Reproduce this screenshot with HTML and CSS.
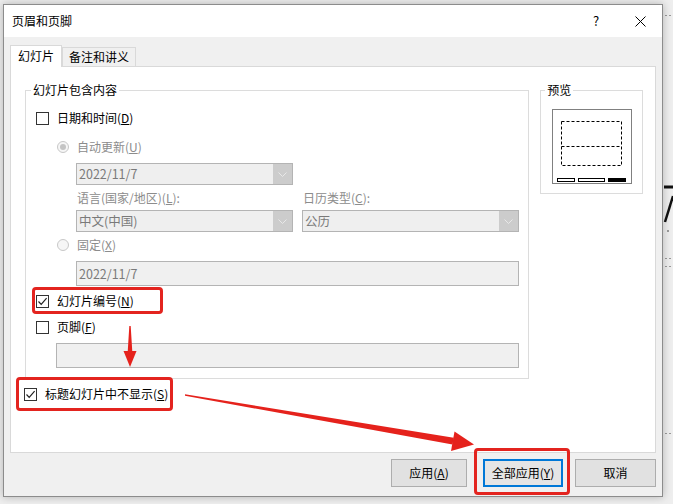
FILE: index.html
```html
<!DOCTYPE html>
<html lang="zh-CN">
<head>
    <meta charset="UTF-8">
    <title>页眉和页脚</title>
    <link rel="stylesheet" href="styles.css">
</head>
<body>
    <!-- slide behind the dialog -->
    <svg class="slide-bits" width="673" height="504" viewBox="0 0 673 504">
        <g stroke="#9a9a9a" stroke-dasharray="2 2">
            <line x1="665" y1="15.5" x2="673" y2="15.5"/>
            <line x1="665" y1="258.5" x2="673" y2="258.5"/>
            <line x1="665" y1="266.5" x2="673" y2="266.5"/>
            <line x1="665" y1="433.5" x2="673" y2="433.5"/>
        </g>
        <line x1="664" y1="187" x2="673" y2="187" stroke="#111" stroke-width="3"/>
        <line x1="673" y1="196" x2="665" y2="222" stroke="#111" stroke-width="2.5"/>
        <circle cx="668" cy="231" r="0.8" fill="#333"/>
    </svg>

    <div class="dialog">
        <div class="titlebar">
            <span class="title">页眉和页脚</span>
            <span class="title-btn">?</span>
            <span class="title-btn">
                <svg width="11" height="11" viewBox="0 0 11 11"><path d="M0.5 0.5 L10.5 10.5 M10.5 0.5 L0.5 10.5" stroke="#000" stroke-width="1"/></svg>
            </span>
        </div>

        <div class="content">
            <!-- Tabs -->
            <div class="tabs">
                <div class="tab active">幻灯片</div>
                <div class="tab">备注和讲义</div>
            </div>

            <div class="panel">
                <div class="panel-top">
                    <div class="group main-group">
                        <div class="legend">幻灯片包含内容</div>

                        <div class="check-row first-row"><span class="checkbox"></span><span>日期和时间(<u>D</u>)</span></div>

                        <div class="sub">
                            <div class="radio-row auto-row"><span class="radio on"></span><span>自动更新(<u>U</u>)</span></div>
                            <div class="indent">
                                <div class="select date-select"><span class="select-text">2022/11/7</span><span class="drop"><svg width="9" height="5" viewBox="0 0 9 5"><path d="M0.5 0.5 L4.5 4.5 L8.5 0.5" fill="none" stroke="#e8e8e8"/></svg></span></div>
                                <div class="two-col">
                                    <div class="col">
                                        <div class="label">语言(国家/地区)(<u>L</u>):</div>
                                        <div class="select"><span class="select-text">中文(中国)</span><span class="drop"><svg width="9" height="5" viewBox="0 0 9 5"><path d="M0.5 0.5 L4.5 4.5 L8.5 0.5" fill="none" stroke="#e8e8e8"/></svg></span></div>
                                    </div>
                                    <div class="col">
                                        <div class="label">日历类型(<u>C</u>):</div>
                                        <div class="select"><span class="select-text">公历</span><span class="drop"><svg width="9" height="5" viewBox="0 0 9 5"><path d="M0.5 0.5 L4.5 4.5 L8.5 0.5" fill="none" stroke="#e8e8e8"/></svg></span></div>
                                    </div>
                                </div>
                            </div>
                            <div class="radio-row fixed-row"><span class="radio"></span><span>固定(<u>X</u>)</span></div>
                            <div class="indent">
                                <div class="textbox fixed-box">2022/11/7</div>
                            </div>
                        </div>

                        <div class="check-row number-row">
                            <span class="checkbox"><svg width="11" height="11" viewBox="0 0 11 11"><path d="M1.5 5.5 L4.2 8.3 L9.6 2.2" fill="none" stroke="#222" stroke-width="1.2"/></svg></span>
                            <span>幻灯片编号(<u>N</u>)</span>
                        </div>
                        <div class="check-row footer-row"><span class="checkbox"></span><span>页脚(<u>F</u>)</span></div>
                        <div class="textbox footer-box"></div>
                    </div>

                    <div class="group preview-group">
                        <div class="legend">预览</div>
                        <div class="preview">
                            <svg width="80" height="75" viewBox="0 0 80 75">
                                <rect x="0.5" y="0.5" width="79" height="74" fill="#fff" stroke="#808080"/>
                                <g fill="none" stroke="#000" stroke-dasharray="3 2">
                                    <rect x="9.5" y="12.5" width="60" height="44"/>
                                    <line x1="9.5" y1="37.5" x2="69.5" y2="37.5"/>
                                </g>
                                <rect x="5.5" y="69.5" width="17" height="3" fill="#fff" stroke="#000"/>
                                <rect x="26.5" y="69.5" width="26" height="3" fill="#fff" stroke="#000"/>
                                <rect x="56" y="69" width="18" height="4" fill="#000"/>
                            </svg>
                        </div>
                    </div>
                </div>

                <div class="check-row hide-row">
                    <span class="checkbox"><svg width="11" height="11" viewBox="0 0 11 11"><path d="M1.5 5.5 L4.2 8.3 L9.6 2.2" fill="none" stroke="#222" stroke-width="1.2"/></svg></span>
                    <span>标题幻灯片中不显示(<u>S</u>)</span>
                </div>
            </div>

            <!-- Buttons -->
            <div class="buttons">
                <div class="btn btn-apply">应用(<u>A</u>)</div>
                <div class="btn btn-all">全部应用(<u>Y</u>)</div>
                <div class="btn btn-cancel">取消</div>
            </div>
        </div>
    </div>

    <!-- annotations -->
    <div class="callout c-number"></div>
    <div class="callout c-hide"></div>
    <div class="callout c-all"></div>

    <svg class="arrows" width="673" height="504" viewBox="0 0 673 504">
        <g fill="#e5221c">
            <polygon points="129.3,326 130.7,326 132.4,353 127.6,353"/>
            <polygon points="123.5,351 136.5,351 130,367"/>
            <polygon points="185,394.3 185,395.7 452.5,444.5 453.8,437.8"/>
            <polygon points="454.5,431.5 474,444.5 451,451"/>
        </g>
    </svg>
</body>
</html>
```

FILE: styles.css
```css
/* Reset */
* {
    margin: 0;
    padding: 0;
    box-sizing: border-box;
}

body {
    width: 673px;
    height: 504px;
    overflow: hidden;
    position: relative;
    padding: 4px 0 0 3px;
    background-color: #eeeeee;
    font-family: "Noto Sans CJK SC", "Microsoft YaHei", sans-serif;
    font-size: 12px;
    line-height: 16px;
    color: #000;
}

u {
    text-underline-offset: 1px;
}

.slide-bits {
    position: absolute;
    left: 0;
    top: 0;
    z-index: 0;
}

/* Dialog */
.dialog {
    position: relative;
    z-index: 1;
    width: 660px;
    height: 493px;
    border: 1px solid #8c8c8c;
    background-color: #f0f0f0;
    box-shadow: 0 0 8px rgba(0, 0, 0, 0.25);
    display: flex;
    flex-direction: column;
}

.titlebar {
    height: 32px;
    background-color: #fff;
    display: flex;
    align-items: center;
    padding-left: 8px;
}

.title {
    flex: 1;
}

.title-btn {
    width: 44px;
    height: 32px;
    display: flex;
    align-items: center;
    justify-content: center;
    font-size: 13px;
}

.content {
    padding: 8px 6px 0;
}

/* Tabs */
.tabs {
    display: flex;
    align-items: flex-end;
    height: 21px;
}

.tab {
    height: 19px;
    padding: 0 6px;
    border: 1px solid #d9d9d9;
    border-bottom: none;
    background-color: #f0f0f0;
    line-height: 18px;
}

.tab.active {
    position: relative;
    z-index: 1;
    height: 22px;
    margin-bottom: -1px;
    padding: 0 7px;
    background-color: #fff;
    line-height: 20px;
}

.panel {
    height: 387px;
    border: 1px solid #d9d9d9;
    background-color: #fff;
    padding: 23px 12px 0 14px;
}

.panel-top {
    display: flex;
    align-items: flex-start;
    gap: 11px;
}

/* Group boxes */
.group {
    border: 1px solid #dcdcdc;
}

.main-group {
    width: 506px;
    padding: 0 0 10px 10px;
}

.preview-group {
    width: 103px;
    padding: 0 0 9px 11px;
}

.legend {
    display: table;
    margin: -9px 0 0 -5px;
    padding: 0 2px;
    background-color: #fff;
    line-height: 16px;
}

.preview-group .legend {
    margin-left: -7px;
}

.preview {
    width: 80px;
    height: 75px;
    margin-top: 11px;
}

.preview svg {
    display: block;
}

/* Checkbox / radio rows */
.check-row,
.radio-row {
    display: flex;
    align-items: center;
    gap: 8px;
    height: 20px;
}

.checkbox {
    width: 13px;
    height: 13px;
    border: 1px solid #333;
    background-color: #fff;
    display: flex;
    align-items: center;
    justify-content: center;
}

.radio {
    width: 12px;
    height: 12px;
    border: 1px solid #c8c8c8;
    border-radius: 50%;
    background-color: #f6f6f6;
    display: flex;
    align-items: center;
    justify-content: center;
}

.radio.on::after {
    content: "";
    width: 6px;
    height: 6px;
    border-radius: 50%;
    background-color: #c4c4c4;
}

.radio-row {
    color: #8c8c8c;
}

.first-row {
    margin-top: 10px;
}

.sub {
    padding-left: 21px;
}

.auto-row {
    margin-top: 9px;
}

.indent {
    padding-left: 19px;
}

/* Disabled fields */
.select {
    width: 217px;
    height: 22px;
    border: 1px solid #b4b4b4;
    background-color: #efefef;
    color: #7a7a7a;
    display: flex;
    align-items: stretch;
}

.select-text {
    flex: 1;
    padding-left: 2px;
    line-height: 20px;
    font-size: 12.5px;
}

.drop {
    width: 19px;
    background-color: #cccccc;
    display: flex;
    align-items: center;
    justify-content: center;
}

.date-select {
    margin-top: 6px;
}

.two-col {
    display: flex;
    gap: 9px;
}

.label {
    margin-top: 5px;
    padding-left: 1px;
    color: #8c8c8c;
}

.label + .select {
    margin-top: 4px;
}

.fixed-row {
    margin-top: 3px;
}

.textbox {
    height: 25px;
    border: 1px solid #b4b4b4;
    background-color: #f0f0f0;
    color: #7a7a7a;
    padding-left: 2px;
    line-height: 23px;
    font-size: 12.5px;
}

.fixed-box {
    width: 443px;
    margin-top: 6px;
}

.number-row {
    margin-top: 5px;
}

.footer-row {
    margin-top: 6px;
}

.footer-box {
    width: 463px;
    margin: 6px 0 0 20px;
}

.hide-row {
    margin: 5px 0 0 -1px;
}

/* Buttons */
.buttons {
    display: flex;
    justify-content: flex-end;
    margin-top: 6px;
}

.btn {
    height: 28px;
    border: 1px solid #adadad;
    background-color: #e1e1e1;
    display: flex;
    align-items: center;
    justify-content: center;
}

.btn-apply {
    width: 76px;
}

.btn-all {
    width: 80px;
    margin-left: 16px;
    border: 2px solid #0078d7;
    background-color: #e5e5e5;
}

.btn-cancel {
    width: 81px;
    margin-left: 12px;
}

/* Annotations */
.callout {
    position: absolute;
    z-index: 3;
    border: 3px solid #e3241f;
    border-radius: 4px;
}

.c-number {
    left: 32px;
    top: 287px;
    width: 131px;
    height: 27px;
}

.c-hide {
    left: 16px;
    top: 377px;
    width: 157px;
    height: 34px;
}

.c-all {
    left: 474px;
    top: 448px;
    width: 96px;
    height: 47px;
}

.arrows {
    position: absolute;
    left: 0;
    top: 0;
    z-index: 4;
}
```
